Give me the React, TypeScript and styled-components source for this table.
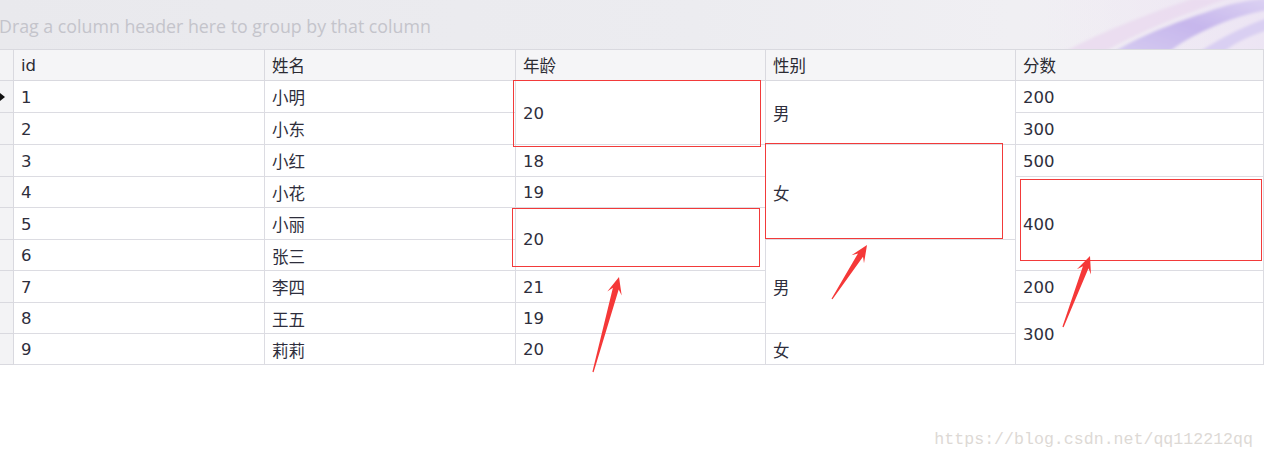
import styled, { createGlobalStyle } from "styled-components";

const GlobalStyle = createGlobalStyle`
  html, body {
    margin: 0;
    padding: 0;
    background: #ffffff;
  }
  body {
    font-family: "DejaVu Sans", "Noto Sans CJK SC", sans-serif;
    color: #2e2e3a;
  }
`;

const Page = styled.div`
  position: relative;
  width: 1264px;
  height: 458px;
  overflow: hidden;
  display: flex;
  flex-direction: column;
`;

const GroupPanel = styled.div`
  position: relative;
  height: 49px;
  border-bottom: 1px solid #d9d9df;
  background: linear-gradient(90deg, #e9e9ed 0%, #ececf0 55%, #f0eff3 80%, #f1eef4 100%);
  display: flex;
  align-items: center;
  overflow: hidden;
`;

const GroupHint = styled.span`
  font-family: "Open Sans", "Liberation Sans", sans-serif;
  font-size: 17.8px;
  color: #c4c4cb;
  margin-left: -1px;
  margin-top: 2px;
  white-space: nowrap;
`;

const Swoosh = styled.svg`
  position: absolute;
  right: 0;
  top: 0;
`;

const Grid = styled.div<{ $rows: string }>`
  display: grid;
  grid-template-columns: 14px 251px 251px 250px 250px 248px;
  grid-template-rows: ${(p) => p.$rows};
`;

const HeaderCell = styled.div<{ $col: number }>`
  grid-column: ${(p) => p.$col};
  grid-row: 1;
  box-sizing: border-box;
  background: #f5f5f7;
  border-right: 1px solid #d9d9df;
  border-bottom: 1px solid #d9d9df;
  padding-left: 7px;
  display: flex;
  align-items: center;
  font-size: 16.5px;
  color: #2b2b33;
`;

const Indicator = styled.div<{ $row: number }>`
  grid-column: 1;
  grid-row: ${(p) => p.$row};
  box-sizing: border-box;
  background: #f3f3f5;
  border-right: 1px solid #d9d9df;
  border-bottom: 1px solid #d9d9df;
  display: flex;
  align-items: center;
`;

const FocusMark = styled.span`
  width: 0;
  height: 0;
  border-top: 4px solid transparent;
  border-bottom: 4px solid transparent;
  border-left: 5px solid #111;
`;

const Cell = styled.div<{ $col: number; $row: number; $span: number }>`
  grid-column: ${(p) => p.$col};
  grid-row: ${(p) => p.$row} / span ${(p) => p.$span};
  box-sizing: border-box;
  background: #ffffff;
  border-right: 1px solid #dcdce2;
  border-bottom: 1px solid #dcdce2;
  padding: 1px 0 0 7px;
  display: flex;
  align-items: center;
  font-size: 16.5px;
  color: #2e2e3c;
`;

const Footer = styled.div`
  flex: 1;
  display: flex;
  justify-content: flex-end;
  align-items: flex-end;
  padding: 0 11px 9px 0;
`;

const Watermark = styled.span`
  font-family: "Liberation Mono", "DejaVu Sans Mono", monospace;
  font-size: 16.6px;
  color: #ddd9d5;
`;

const Mark = styled.div<{ $x: number; $y: number; $w: number; $h: number }>`
  position: absolute;
  left: ${(p) => p.$x}px;
  top: ${(p) => p.$y}px;
  width: ${(p) => p.$w}px;
  height: ${(p) => p.$h}px;
  box-sizing: border-box;
  border: 1.5px solid #f23a3a;
  pointer-events: none;
`;

const ArrowLayer = styled.svg`
  position: absolute;
  left: 0;
  top: 0;
  pointer-events: none;
`;

type Span = { v: string; span?: number };

const columns = ["id", "姓名", "年龄", "性别", "分数"];
const names = ["小明", "小东", "小红", "小花", "小丽", "张三", "李四", "王五", "莉莉"];

const ages: Span[] = [
  { v: "20", span: 2 },
  { v: "18" },
  { v: "19" },
  { v: "20", span: 2 },
  { v: "21" },
  { v: "19" },
  { v: "20" },
];
const genders: Span[] = [
  { v: "男", span: 2 },
  { v: "女", span: 3 },
  { v: "男", span: 3 },
  { v: "女" },
];
const scores: Span[] = [
  { v: "200" },
  { v: "300" },
  { v: "500" },
  { v: "400", span: 3 },
  { v: "200" },
  { v: "300", span: 2 },
];

const marks = [
  { x: 513, y: 80, w: 248, h: 67 },
  { x: 512, y: 208, w: 248, h: 59 },
  { x: 765, y: 143, w: 238, h: 96 },
  { x: 1020, y: 179, w: 242, h: 82 },
];

const arrows = [
  { x1: 593, y1: 372, x2: 619, y2: 277 },
  { x1: 832, y1: 299, x2: 867, y2: 245 },
  { x1: 1063, y1: 327, x2: 1090, y2: 256 },
];

const arrowPoints = (x1: number, y1: number, x2: number, y2: number) => {
  const len = Math.hypot(x2 - x1, y2 - y1);
  const ux = (x2 - x1) / len;
  const uy = (y2 - y1) / len;
  const px = -uy;
  const py = ux;
  const h = 17;
  const w = 7.5;
  const s = 3;
  const at = (back: number, side: number) =>
    `${(x2 - ux * back + px * side).toFixed(1)},${(y2 - uy * back + py * side).toFixed(1)}`;
  return [
    at(0, 0),
    at(h, w),
    at(h - 5, s),
    `${(x1 + px * 0.6).toFixed(1)},${(y1 + py * 0.6).toFixed(1)}`,
    `${(x1 - px * 0.6).toFixed(1)},${(y1 - py * 0.6).toFixed(1)}`,
    at(h - 5, -s),
    at(h, -w),
  ].join(" ");
};

// stack spans top to bottom, starting under the header
const placed = (list: Span[]) => {
  let row = 2;
  return list.map((c) => {
    const span = c.span ?? 1;
    const out = { ...c, row, span };
    row += span;
    return out;
  });
};

const rowSizes = "31px 32px 32px 32px 31px 32px 31px 32px 31px 31px";

const App = () => {
  return (
    <>
      <GlobalStyle />
      <Page>
        <GroupPanel>
          <GroupHint>Drag a column header here to group by that column</GroupHint>
          <Swoosh width="220" height="49" viewBox="0 0 220 49">
            <defs>
              <linearGradient id="sw-bg" x1="0" y1="0" x2="1" y2="0">
                <stop offset="0" stopColor="#efe6f3" stopOpacity="0" />
                <stop offset="1" stopColor="#ece4f4" stopOpacity="0.9" />
              </linearGradient>
              <linearGradient id="sw-purple" x1="0" y1="1" x2="1" y2="0">
                <stop offset="0" stopColor="#d5cbf1" />
                <stop offset="0.5" stopColor="#c6b6ec" />
                <stop offset="1" stopColor="#dcd2f3" />
              </linearGradient>
              <filter id="sw-soft" x="-10%" y="-10%" width="120%" height="120%">
                <feGaussianBlur stdDeviation="1.6" />
              </filter>
            </defs>
            <rect x="0" y="0" width="220" height="49" fill="url(#sw-bg)" />
            <g filter="url(#sw-soft)">
              <path d="M20 52 C 60 30, 110 12, 150 -2 L 185 -2 C 140 14, 95 32, 60 52 Z" fill="#ead9ef" opacity="0.8" />
              <path d="M70 52 C 100 33, 150 16, 175 8 C 190 3, 205 0, 224 -2 L 224 10 C 195 14, 150 32, 125 52 Z" fill="url(#sw-purple)" />
              <path d="M155 52 C 180 36, 205 24, 224 18 L 224 30 C 205 36, 190 43, 180 52 Z" fill="#d9cff2" />
            </g>
          </Swoosh>
        </GroupPanel>

        <Grid $rows={rowSizes}>
          <Indicator $row={1} />
          {columns.map((c, i) => (
            <HeaderCell key={c} $col={i + 2}>
              {c}
            </HeaderCell>
          ))}

          {names.map((n, i) => (
            <Indicator key={`ind-${n}`} $row={i + 2}>
              {i === 0 && <FocusMark />}
            </Indicator>
          ))}
          {names.map((n, i) => (
            <Cell key={`id-${n}`} $col={2} $row={i + 2} $span={1}>
              {i + 1}
            </Cell>
          ))}
          {names.map((n, i) => (
            <Cell key={`nm-${n}`} $col={3} $row={i + 2} $span={1}>
              {n}
            </Cell>
          ))}
          {placed(ages).map((c) => (
            <Cell key={`age-${c.row}`} $col={4} $row={c.row} $span={c.span}>
              {c.v}
            </Cell>
          ))}
          {placed(genders).map((c) => (
            <Cell key={`sex-${c.row}`} $col={5} $row={c.row} $span={c.span}>
              {c.v}
            </Cell>
          ))}
          {placed(scores).map((c) => (
            <Cell key={`sc-${c.row}`} $col={6} $row={c.row} $span={c.span}>
              {c.v}
            </Cell>
          ))}
        </Grid>

        <Footer>
          <Watermark>https://blog.csdn.net/qq112212qq</Watermark>
        </Footer>

        {marks.map((m) => (
          <Mark key={`${m.x}-${m.y}`} $x={m.x} $y={m.y} $w={m.w} $h={m.h} />
        ))}
        <ArrowLayer width="1264" height="458" viewBox="0 0 1264 458">
          {arrows.map((a) => (
            <polygon key={a.x1} points={arrowPoints(a.x1, a.y1, a.x2, a.y2)} fill="#f53838" />
          ))}
        </ArrowLayer>
      </Page>
    </>
  );
};

export default App;
